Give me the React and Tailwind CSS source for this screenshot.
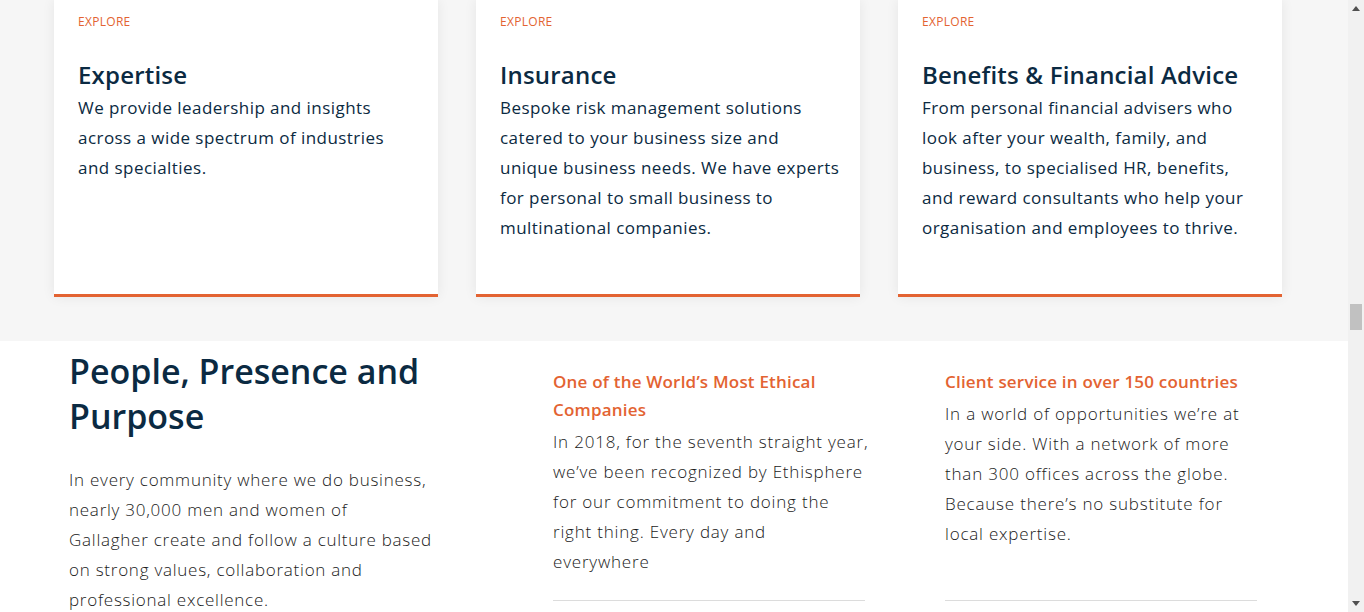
import React from 'react';

const cards = [
  {
    title: 'Expertise',
    lines: ['We provide leadership and insights', 'across a wide spectrum of industries', 'and specialties.'],
  },
  {
    title: 'Insurance',
    lines: [
      'Bespoke risk management solutions',
      'catered to your business size and',
      'unique business needs. We have experts',
      'for personal to small business to',
      'multinational companies.',
    ],
  },
  {
    title: 'Benefits & Financial Advice',
    lines: [
      'From personal financial advisers who',
      'look after your wealth, family, and',
      'business, to specialised HR, benefits,',
      'and reward consultants who help your',
      'organisation and employees to thrive.',
    ],
  },
];

const Lines = ({ lines }) =>
  lines.map((l, i) => (
    <React.Fragment key={i}>
      {l}
      {i < lines.length - 1 && <br />}
    </React.Fragment>
  ));

const ExploreCard = ({ title, lines }) => (
  <div className="w-[384px] h-[297px] shrink-0 bg-white border-b-[3px] border-[#e36332] shadow-[0_0_12px_rgba(0,0,0,0.07)] pl-[24px] pt-[14px]">
    <div className="text-[12px] leading-[16px] text-[#e36332] uppercase tracking-[0.3px]">Explore</div>
    <h3 className="mt-[30px] text-[24px] leading-[30px] font-semibold text-[#0b2a42] tracking-[0.2px]">{title}</h3>
    <p className="mt-[3px] text-[17px] leading-[30px] font-normal text-[#0b2a42] tracking-[0.45px] whitespace-nowrap">
      <Lines lines={lines} />
    </p>
  </div>
);

const Scrollbar = () => (
  <div className="w-[16px] h-full bg-[#f1f1f1] flex flex-col items-center">
    <div className="h-[17px] flex items-center justify-center">
      <svg width="8" height="5" viewBox="0 0 8 5"><path d="M4 0L8 5H0z" fill="#505050" /></svg>
    </div>
    <div className="mt-[287px] w-[12px] h-[26px] bg-[#c1c1c1]" />
    <div className="mt-auto h-[17px] flex items-center justify-center">
      <svg width="8" height="5" viewBox="0 0 8 5"><path d="M0 0H8L4 5z" fill="#505050" /></svg>
    </div>
  </div>
);

export default function App() {
  return (
    <div
      className="flex h-[612px] w-full overflow-hidden bg-white"
      style={{ fontFamily: '"Open Sans", "Liberation Sans", sans-serif' }}
    >
      <div className="flex-1 flex flex-col min-w-0">
        <section className="h-[341px] shrink-0 bg-[#f6f6f6] flex pl-[54px] gap-[38px]">
          {cards.map((c) => (
            <ExploreCard key={c.title} {...c} />
          ))}
        </section>
        <section className="flex-1 flex pl-[69px] text-[#1a1a1a]">
          <div className="w-[484px] pt-[8px]">
            <h2 className="text-[34px] leading-[45px] font-semibold text-[#0b2a42]">
              People, Presence and
              <br />
              Purpose
            </h2>
            <p className="mt-[26px] text-[17px] leading-[30px] font-light tracking-[0.75px] whitespace-nowrap">
              <Lines
                lines={[
                  'In every community where we do business,',
                  'nearly 30,000 men and women of',
                  'Gallagher create and follow a culture based',
                  'on strong values, collaboration and',
                  'professional excellence.',
                ]}
              />
            </p>
          </div>
          <div className="w-[312px] pt-[27px]">
            <h4 className="text-[17px] leading-[28px] font-semibold text-[#e36332] tracking-[0.2px] whitespace-nowrap">
              One of the World’s Most Ethical
              <br />
              Companies
            </h4>
            <p className="mt-[3px] text-[17px] leading-[30px] font-light tracking-[0.8px] whitespace-nowrap">
              <Lines
                lines={[
                  'In 2018, for the seventh straight year,',
                  'we’ve been recognized by Ethisphere',
                  'for our commitment to doing the',
                  'right thing. Every day and',
                  'everywhere',
                ]}
              />
            </p>
            <div className="mt-[23px] h-px bg-[#dcdcdc]" />
          </div>
          <div className="w-[312px] ml-[80px] pt-[27px]">
            <h4 className="text-[17px] leading-[28px] font-semibold text-[#e36332] tracking-[0.2px] whitespace-nowrap">
              Client service in over 150 countries
            </h4>
            <p className="mt-[3px] text-[17px] leading-[30px] font-light tracking-[0.8px] whitespace-nowrap">
              <Lines
                lines={[
                  'In a world of opportunities we’re at',
                  'your side. With a network of more',
                  'than 300 offices across the globe.',
                  'Because there’s no substitute for',
                  'local expertise.',
                ]}
              />
            </p>
            <div className="mt-[51px] h-px bg-[#dcdcdc]" />
          </div>
        </section>
      </div>
      <Scrollbar />
    </div>
  );
}
